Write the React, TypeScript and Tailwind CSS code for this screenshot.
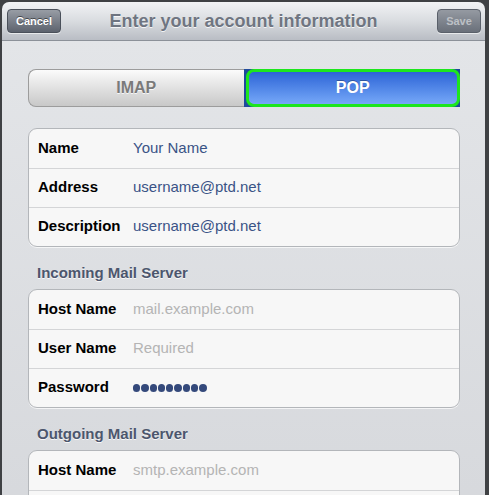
import React from "react";

const font = { fontFamily: '"Liberation Sans", Arial, sans-serif' };

function Row({ label, value, kind, first }: { label?: string; value?: string; kind: "value" | "placeholder" | "password" | "empty"; first?: boolean }) {
  return (
    <div className={`flex items-center h-[39px] ${first ? "" : "border-t border-[#d4d5d7]"}`}>
      <div className="w-[104px] pl-[9px] pb-[1px] text-[15px] font-bold text-black shrink-0">{label}</div>
      {kind === "password" ? (
        <div className="flex gap-[1px] items-center">
          {Array.from({ length: 9 }).map((_, i) => (
            <span key={i} className="block w-[7.3px] h-[7.3px] rounded-full bg-[#34497b]" />
          ))}
        </div>
      ) : kind === "empty" ? null : (
        <div className={`text-[15px] pb-[1px] ${kind === "value" ? "text-[#3a5386]" : "text-[#b4b4b4]"}`}>{value}</div>
      )}
    </div>
  );
}

function Group({ children }: { children: React.ReactNode }) {
  return (
    <div className="rounded-[9px] border border-[#b3b6ba] bg-[#f7f7f7] overflow-hidden shadow-[0_1px_0_rgba(255,255,255,0.7)]">
      {children}
    </div>
  );
}

function SectionHeader({ text }: { text: string }) {
  return (
    <div className="h-[42px] flex items-end pb-[5px] pl-[9px] text-[15px] font-bold text-[#4c566d] [text-shadow:0_1px_0_rgba(255,255,255,0.8)]">
      {text}
    </div>
  );
}

export default function App() {
  return (
    <div className="w-[489px] h-[495px] bg-[#3f4144] overflow-hidden" style={font}>
      <div className="ml-[2px] mt-[2px] w-[483px] h-[493px] rounded-t-[7px] overflow-hidden flex flex-col">
        <div className="h-[39px] shrink-0 bg-gradient-to-b from-[#f2f3f5] via-[#d9dce0] to-[#b9bdc4] border-b border-[#8c9199] flex items-center justify-between pl-[5px] pr-[4px] relative">
          <div className="w-[54px] h-[24px] rounded-[4px] border border-[#4a505a] bg-gradient-to-b from-[#989da5] to-[#5d636e] flex items-center justify-center text-[11px] font-bold text-white [text-shadow:0_-1px_0_rgba(0,0,0,0.5)] shadow-[0_1px_0_rgba(255,255,255,0.6)]">
            Cancel
          </div>
          <div className="absolute inset-0 flex items-center justify-center pointer-events-none pt-[1px]">
            <span className="text-[18px] font-bold text-[#6f7581] [text-shadow:0_1px_0_rgba(255,255,255,0.8)]">Enter your account information</span>
          </div>
          <div className="w-[44px] h-[24px] rounded-[4px] border border-[#5a606a] bg-gradient-to-b from-[#959aa2] to-[#6a707a] flex items-center justify-center text-[11px] font-bold text-[#bcc0c5] shadow-[0_1px_0_rgba(255,255,255,0.6)]">
            Save
          </div>
        </div>
        <div className="flex-1 bg-gradient-to-b from-[#e3e5e8] to-[#d6d8dc] pl-[26px] pr-[25px] pt-[28px]">
          <div className="flex h-[38px]">
            <div className="flex-1 rounded-l-[8px] border border-[#9c9c9c] border-r-0 bg-gradient-to-b from-[#fbfbfb] to-[#c8c8c8] flex items-center justify-center text-[16px] font-bold text-[#7a7a7a] [text-shadow:0_1px_0_rgba(255,255,255,0.8)]">
              IMAP
            </div>
            <div className="flex-1 bg-[#1f4a9c] pl-[2px]">
              <div className="h-full rounded-[8px] border-[3px] border-[#1de61d] bg-gradient-to-b from-[#2d63d6] to-[#76a8f8] flex items-center justify-center text-[16px] font-bold text-white [text-shadow:0_-1px_0_rgba(0,0,0,0.3)]">
                POP
              </div>
            </div>
          </div>
          <div className="h-[21px]" />
          <Group>
            <Row first label="Name" value="Your Name" kind="value" />
            <Row label="Address" value="username@ptd.net" kind="value" />
            <Row label="Description" value="username@ptd.net" kind="value" />
          </Group>
          <SectionHeader text="Incoming Mail Server" />
          <Group>
            <Row first label="Host Name" value="mail.example.com" kind="placeholder" />
            <Row label="User Name" value="Required" kind="placeholder" />
            <Row label="Password" kind="password" />
          </Group>
          <SectionHeader text="Outgoing Mail Server" />
          <Group>
            <Row first label="Host Name" value="smtp.example.com" kind="placeholder" />
            <Row kind="empty" />
          </Group>
        </div>
      </div>
    </div>
  );
}
